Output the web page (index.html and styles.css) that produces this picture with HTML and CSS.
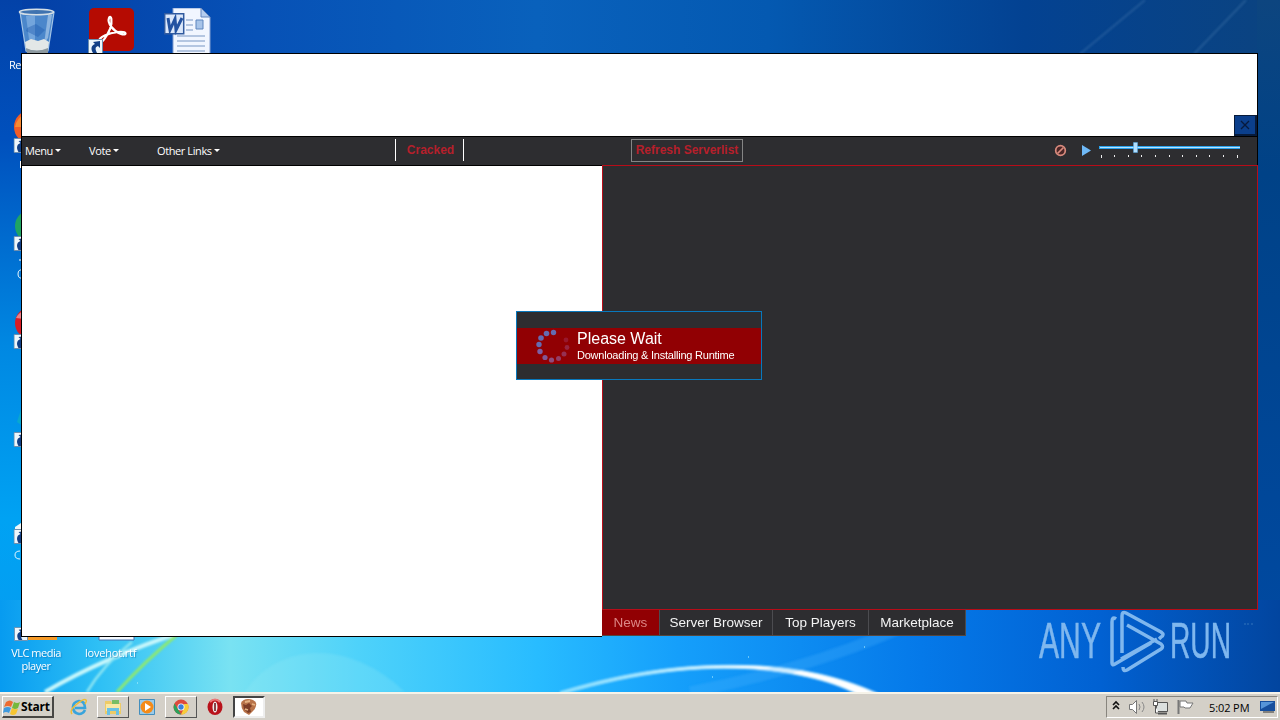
FILE: index.html
```html
<!DOCTYPE html>
<html lang="en">
<head>
<meta charset="utf-8">
<title>Desktop</title>
<link rel="stylesheet" href="styles.css">
</head>
<body>
<svg width="0" height="0" class="defs">
  <defs>
    <symbol id="shortcut" viewBox="0 0 15 15"><path fill="#eef6fb" stroke="#6d8fb0" d="M.5.5h14v14H.5z"/><path d="M5 14C2 9 4 6 7 5L5 3l7-1v7l-2-2c-3 1-3 3-1 7z" fill="#123f86"/></symbol>
  </defs>
</svg>
<main class="desktop">
  <svg class="wallpaper" viewBox="0 0 1280 692" preserveAspectRatio="none">
    <defs>
      <linearGradient id="side" x1="0" y1="0" x2="0" y2="1"><stop offset="0" stop-color="#0342a8"/><stop offset=".2" stop-color="#0050bd"/><stop offset=".5" stop-color="#0088e2"/><stop offset=".75" stop-color="#00a2f3"/><stop offset="1" stop-color="#079bf0"/></linearGradient>
      <linearGradient id="top"><stop offset="0" stop-color="#033ea5"/><stop offset=".2" stop-color="#0751b6"/><stop offset=".42" stop-color="#0961bc"/><stop offset=".6" stop-color="#0459b1"/><stop offset=".8" stop-color="#034292"/><stop offset="1" stop-color="#0b4380"/></linearGradient>
      <linearGradient id="low"><stop offset="0" stop-color="#079bf0"/><stop offset=".08" stop-color="#30c1f5"/><stop offset=".18" stop-color="#79e2f2"/><stop offset=".28" stop-color="#4ed2fa"/><stop offset=".42" stop-color="#28bcff"/><stop offset=".53" stop-color="#159ffb"/><stop offset=".72" stop-color="#0579e9"/><stop offset=".86" stop-color="#0161d2"/><stop offset="1" stop-color="#02459f"/></linearGradient>
      <linearGradient id="right" x1="0" y1="0" x2="0" y2="1"><stop offset="0" stop-color="#0d457f"/><stop offset=".25" stop-color="#004287"/><stop offset="1" stop-color="#004aa4"/></linearGradient>
      <filter id="soft" x="-10%" y="-50%" width="120%" height="200%"><feGaussianBlur stdDeviation="1.1"/></filter>
      <linearGradient id="arc"><stop offset="0" stop-color="#8cecff" stop-opacity=".6"/><stop offset=".6" stop-color="#fff"/><stop offset="1" stop-color="#fff"/></linearGradient>
    </defs>
    <path fill="url(#top)" d="M0 0h1280v70H0z"/>
    <path fill="url(#side)" d="M0 0h22v692H0z"/>
    <path fill="url(#right)" d="M1257 0h23v692h-23z"/>
    <path fill="url(#low)" d="M0 600h1280v92H0z"/>
    <g filter="url(#soft)">
      <path d="M45 692Q105 657 185 631" stroke="#c8f7fb" stroke-width="4" fill="none"/>
      <path d="M87 692Q103 665 132 642" stroke="#8ee6f3" stroke-width="2.5" fill="none"/>
      <path d="M117 692Q145 661 178 634" stroke="#8ee970" stroke-width="3" fill="none"/>
      <path d="M245 692C275 645 345 635 405 692" fill="#9cecf6" opacity=".22"/>
      <path d="M560 692C650 665 710 664 760 666C810 669 850 680 885 697L862 697C835 681 798 673 755 669C700 666 640 671 562 694z" fill="url(#arc)" stroke="#c8efff" stroke-width="1"/>
      <path d="M690 692Q830 665 940 610" stroke="#4bb7ff" stroke-width="11" fill="none" opacity=".25"/>
      <path d="M1145 0L1080 54M1246 0l-52 54" stroke="#6f9dc7" stroke-width="2" opacity=".25"/>
    </g>
    <path d="M137 683h1M748 657h1M864 647h1M712 677h1" stroke="#b5f3ff" stroke-width="1.500" opacity=".7"/>
    <path d="M1244 624h2M1247 624h2M1251 624h2" stroke="#3275bb" stroke-width="1"/>
  </svg>

  <svg class="icon bin" viewBox="0 0 40 48"><path d="M3 4l6 39q12 6 22 0l6-39z" fill="#4b87cb" stroke="#a4c5e6" stroke-width="1.200"/><path d="M9 8l4 31 5 3V8z" fill="#9bc4ee" opacity=".5"/><path d="M31 7l-4 29 4-6 4-23z" fill="#b9d3ee" opacity=".6"/><path d="M10 20l9-4 9 6-7 7-12-6" fill="#1b57ac" opacity=".4"/><path d="M8 34l6-3 7 2 6-2 5 3-1 7q-10 4-22 0z" fill="#e3e7e7"/><path d="M9 40q10 5 22 0v5q-11 4-21 0z" fill="#8d999f"/><ellipse cx="19.500" cy="4" rx="17" ry="2.800" fill="#3f73b0" stroke="#d5dfe6" stroke-width="1.600"/></svg>
  <svg class="icon acrobat" viewBox="0 0 48 48"><rect x="2" y="0" width="45" height="43" rx="5" fill="#b50b02"/><path d="M12 34C11 29 22 25 31 24c10-1 9 4 3 2-8-3-14-11-12-16 2-4 4 3 1 11-3 7-8 15-11 13z" fill="none" stroke="#fff" stroke-width="2.200"/></svg>
  <svg class="badge acrobat-badge"><use href="#shortcut"/></svg>
  <svg class="icon word" viewBox="0 0 48 46"><path d="M9 0h28l9 9v37H9z" fill="#f1f6ff" stroke="#839fd0"/><path d="M37 0v9h9z" fill="#b5cdef" stroke="#6485bd"/><path d="M22 12h7M22 17h7M22 22h7M13 28h28M13 33h28M13 38h28M13 43h28" stroke="#7895c4" stroke-width="1.200"/><path d="M32 12h7v9h-7z" fill="#a7c4e9" stroke="#5d85be"/><path d="M.7 5.700h19v20H.7z" fill="#dce8fa" stroke="#315b9f" stroke-width="1.500"/><path d="M4 10l2 12 5-11 1 11 6-12" fill="none" stroke="#2453a1" stroke-width="3"/></svg>
  <span class="label recycle">Recycle Bin</span>

  <svg class="edge-icons" viewBox="0 0 24 540" width="24" height="540">
    <circle cx="31" cy="27" r="17" fill="#f05d27"/><path d="M15 27q2-10 10-12v12z" fill="#f78b30"/>
    <circle cx="31" cy="126" r="16" fill="#1fa463"/>
    <circle cx="31" cy="223" r="16" fill="#d91c25"/><path d="M16 218q2-5 8-7v8z" fill="#e9828a"/>
    <path d="M17 322l7-22v27z" fill="#08a8cf"/><path d="M15 427l9-6v9h-9z" fill="#edf7fa"/>
    <use href="#shortcut" x="13.500" y="38" width="15" height="15"/><use href="#shortcut" x="13.500" y="136" width="15" height="15"/><use href="#shortcut" x="13.500" y="234" width="15" height="15"/><use href="#shortcut" x="13.500" y="332" width="15" height="15"/><use href="#shortcut" x="13.500" y="429" width="15" height="15"/>
    <path d="M20.500 61v7M19 160h2" stroke="#fff"/>
    <path d="M23 170q-5-1-5 4t5 4M20 451q-5 0-5 4t5 4" stroke="#e8f7ff" fill="none"/>
  </svg>
  <svg class="vlc" viewBox="0 0 44 15"><path d="M14 8h29v5H14z" fill="#f59a28"/><use href="#shortcut" width="14" height="14"/></svg>
  <svg class="rtf" viewBox="0 0 38 6"><path d="M1 0h35v4H1z" fill="#f5fbff" stroke="#456fb0"/></svg>
  <span class="label vlc-label">VLC media<br>player</span>
  <span class="label rtf-label">lovehot.rtf</span>

  <section class="window">
    <header class="banner"><button class="close" aria-label="Close"><svg viewBox="0 0 10 10"><path d="M1 1l8 8M9 1L1 9" stroke="#071a3d" stroke-width="1.300"/></svg></button></header>
    <nav class="toolbar">
      <span class="menu m1">Menu<i></i></span><span class="menu m2">Vote<i></i></span><span class="menu m3">Other Links<i></i></span>
      <span class="cracked"><b>Cracked</b></span>
      <span class="refresh"><b>Refresh Serverlist</b></span>
      <svg class="player" viewBox="0 0 190 28" width="190" height="28"><circle cx="8.500" cy="13.500" r="4.800" fill="#4c2627" stroke="#d98b7e" stroke-width="1.700"/><path d="M5.500 16.500l6-6" stroke="#d98b7e" stroke-width="1.700"/><path d="M30 8v11l9-5.500z" fill="#6fb9f7"/><path d="M47 10.500h141" stroke="#2aa2ee" stroke-width="3"/><path d="M48 10.500h140" stroke="#b9e5ff"/><path d="M81.500 5.500h4v10h-4z" fill="#b1dfff" stroke="#52abe9" stroke-width=".5"/><path d="M49.500 18v3M62.500 18v2M76.500 18v2M89.500 18v2M103.500 18v2M117.500 18v2M130.500 18v2M144.500 18v2M157.500 18v2M171.500 18v2M185.500 18v3" stroke="#eee"/></svg>
    </nav>
    <div class="content">
      <div class="blank"></div>
      <div class="right">
        <div class="news"></div>
        <div class="tabs"><span class="active">News</span><span class="t2">Server Browser</span><span class="t3">Top Players</span><span class="t4">Marketplace</span></div>
      </div>
    </div>
  </section>

  <div class="dialog">
    <div class="message">
      <svg class="spinner" viewBox="0 0 36 36" width="36" height="36"><g fill="#656bb1"><circle cx="18.500" cy="4.500" r="2.700"/><circle cx="11.500" cy="5.500" r="2.800"/><circle cx="6" cy="10" r="2.800"/><circle cx="4" cy="16.500" r="2.700"/></g><circle cx="5" cy="23.500" r="2.700" fill="#7d5fa4"/><circle cx="10" cy="29.500" r="2.600" fill="#815796"/><circle cx="16.500" cy="32" r="2.600" fill="#8f4c7d"/><circle cx="23.500" cy="30.500" r="2.500" fill="#943d66"/><circle cx="29" cy="26" r="2.500" fill="#963052"/><circle cx="32" cy="19.500" r="2.400" fill="#98243f"/><circle cx="31" cy="12" r="2.400" fill="#98172c"/></svg>
      <div class="copy"><span class="wait">Please Wait</span><span class="progress">Downloading &amp; Installing Runtime</span></div>
    </div>
  </div>

  <svg class="watermark" viewBox="0 0 240 76" width="240" height="76">
    <g fill="none" stroke="#7fb7ee" stroke-width="3.500" stroke-linejoin="round"><path d="M96 11q-4-3-4 3v41q0 3 3 1l36-21M102 45V8q0-5 4-3l35 19q4 3 0 5l-2 2"/><path d="M107 17l34 19q3 3 0 5l-34 21q-4 2-4-3M101 51l36-20"/></g>
    <text x="19" y="50" textLength="62" lengthAdjust="spacingAndGlyphs">ANY</text>
    <text x="150" y="50" textLength="61" lengthAdjust="spacingAndGlyphs">RUN</text>
  </svg>
</main>

<footer class="taskbar">
  <div class="start"><svg viewBox="0 0 18 16" width="18" height="16"><path d="M3 3q4-3 7 0L8 8Q5 6 1 8z" fill="#ed6c31"/><path d="M11 3q3 2 6 0l-2 6q-3 2-6 0z" fill="#75b83d"/><path d="M1 9q4-2 7 0l-2 5q-3-2-6 0z" fill="#3f9ade"/><path d="M9 9q3 2 6 1l-2 5q-3 2-6 0z" fill="#f6c530"/></svg><b>Start</b></div>
  <div class="task ie"><svg viewBox="0 0 18 18"><path d="M15 12q-2 4-6 4-6-1-6-7 0-5 6-6 6 0 6 7H5" fill="none" stroke="#38a4dc" stroke-width="2.700"/><path d="M2 16Q-1 12 7 6q7-6 9-4 1 1-1 4" fill="none" stroke="#edbd37" stroke-width="1.500"/></svg></div>
  <div class="task raised"><svg viewBox="0 0 18 18"><path d="M1 3h6l1 2h9v11H1z" fill="#eecb66"/><path d="M2 6h14v7H2z" fill="#fae8a4"/><path d="M8 2h7v4H8z" fill="#79bd65"/><path d="M3 10h12v7h-3v-4H6v4H3z" fill="#6bc1e4"/></svg></div>
  <div class="task"><svg viewBox="0 0 18 18"><path d="M1.500 1.500h15v15h-15z" fill="#9acbea" stroke="#438ebd"/><circle cx="9" cy="9" r="6.500" fill="#f48b19"/><path d="M7 5l6 4-6 4z" fill="#fff"/></svg></div>
  <div class="task raised"><svg viewBox="0 0 18 18"><circle cx="9" cy="9" r="7.500" fill="#dd4a3d"/><path d="M2.500 5.500L7 13l2 3.500A7.500 7.500 0 0 1 2.500 5.500z" fill="#2aa25b"/><path d="M9 16.500L12 10V6h4a7.500 7.500 0 0 1-7 10.500z" fill="#f7cd3b"/><circle cx="9" cy="9" r="3.500" fill="#fff"/><circle cx="9" cy="9" r="2.700" fill="#3a80dc"/></svg></div>
  <div class="task"><svg viewBox="0 0 18 18"><ellipse cx="9" cy="9" rx="7.500" ry="8" fill="#b9121b"/><path d="M4 4q5-5 10 0" stroke="#ec7777" stroke-width="2" fill="none"/><ellipse cx="9" cy="9" rx="2.500" ry="5.500" fill="#eee"/><path d="M9 5v8" stroke="#650d11" stroke-width="1.500"/></svg></div>
  <div class="task pressed"><svg viewBox="0 0 18 18"><path d="M1 5q2-4 7-4 6 0 8 4 1 4-3 8l-4 4-5-3Q1 10 1 5z" fill="#b87349"/><path d="M3 6l3 1 3-2 3 3-2 2 1 4-3 1-4-4z" fill="#7d3e27"/><path d="M5 4l5-1M12 6l3 1M5 11l3 1" stroke="#e5b384" stroke-width="1.800"/></svg></div>
  <div class="tray">
    <svg viewBox="0 0 90 22" width="90" height="22"><path d="M6 9l3-3 3 3M6 13l3-3 3 3" fill="none" stroke="#111" stroke-width="1.600"/><path d="M22.500 8.500h3l4-4v13l-4-4h-3z" fill="#fff" stroke="#777"/><path d="M32 8q2 3 0 6M35 6q4 5 0 10" fill="none" stroke="#888"/><path d="M49.500 6.500h11v9h-11z" fill="#dce0df" stroke="#555"/><path d="M51 17.500h9" stroke="#555" stroke-width="2"/><path d="M46.500 5.500h4v4h-4zM48.500 10v7h3M47 3v2m3-2v2" fill="#fff" stroke="#555"/><path d="M71.500 4v14" stroke="#777" stroke-width="2"/><path d="M73 5h6l1 2h6l-3 5h-5l-1-1h-4z" fill="#fff" stroke="#777"/></svg>
    <span>5:02 PM</span>
    <svg class="monitor" viewBox="0 0 16 14" width="16" height="14"><path d="M0 1h15v10H0z" fill="#174f9d"/><path d="M1 2h13L1 9z" fill="#5795d8"/><path d="M3 12h11" stroke="#333"/></svg>
  </div>
</footer>
</body>
</html>
```
FILE: styles.css
```css
* { box-sizing: border-box; }
body { margin: 0; width: 1280px; height: 720px; overflow: hidden; display: flex; flex-direction: column; font-family: "Open Sans", "Noto Sans", sans-serif; font-size: 11px; }
svg { display: block; flex: none; }
.defs { position: absolute; }
.desktop { position: relative; height: 692px; flex: none; overflow: hidden; }
.wallpaper { width: 1280px; height: 692px; }
.icon, .badge, .label, .edge-icons, .vlc, .rtf, .window, .dialog, .watermark { position: absolute; }
.bin { left: 17px; top: 8px; width: 40px; height: 48px; }
.acrobat { left: 87px; top: 8px; width: 48px; height: 48px; }
.acrobat-badge { left: 88px; top: 39px; width: 15px; height: 15px; }
.word { left: 164px; top: 8px; width: 48px; height: 46px; }
.label { color: #fff; font-size: 11px; line-height: 13px; letter-spacing: -.5px; white-space: nowrap; text-align: center; text-shadow: 1px 1px 1px #0564a580; }
.recycle { left: 9px; top: 58px; }
.edge-icons { left: 0; top: 100px; }
.vlc { left: 14px; top: 627px; width: 44px; height: 15px; }
.rtf { left: 98px; top: 636px; width: 38px; height: 6px; }
.vlc-label { left: 11px; top: 646px; width: 50px; }
.rtf-label { left: 85px; top: 646px; letter-spacing: -.2px; }

.window { left: 21px; top: 53px; width: 1237px; height: 584px; display: flex; flex-direction: column; }
.banner { height: 83px; flex: none; background: #fff; border: solid #000; border-width: 1px 1px 0; display: flex; align-items: flex-end; justify-content: flex-end; }
.close { width: 23px; height: 21px; padding: 0; border: 1px solid #071b3b; border-right-width: 2px; border-bottom-width: 2px; background: #0b3f8c; display: flex; align-items: center; justify-content: center; }
.close svg { width: 10px; height: 10px; }
.toolbar { height: 30px; flex: none; background: #2d2d30; border: 1px solid #000; display: flex; align-items: flex-start; color: #fff; }
.menu { display: flex; align-items: center; gap: 2px; height: 26px; letter-spacing: -.4px; white-space: nowrap; }
.menu i { border: 3px solid transparent; border-top-color: #fff; border-bottom: 0; }
.m1 { width: 64px; padding-left: 3px; }
.m2 { width: 68px; padding-left: 3px; }
.m3 { width: 241px; padding-left: 3px; }
.cracked { width: 69px; height: 22px; margin-top: 2px; padding-left: 2px; border: solid #fff; border-width: 0 1px; display: flex; align-items: center; justify-content: center; }
.cracked b, .refresh b { font: bold 12px/18px "Liberation Sans", sans-serif; color: #b61f2b; white-space: nowrap; }
.refresh { width: 112px; height: 23px; margin: 2px 0 0 167px; padding-bottom: 2px; border: 1px solid #858585; display: flex; align-items: center; justify-content: center; }
.player { margin-left: 309px; }
.content { display: flex; flex: 1; }
.blank { width: 581px; background: #fff; border: solid #000; border-width: 0 0 1px 1px; }
.right { width: 656px; display: flex; flex-direction: column; margin-top: -1px; }
.news { height: 445px; background: #2d2d30; border: 1px solid #b80c18; }
.tabs { display: flex; width: 364px; height: 27px; background: #2d2d30; border-right: 1px solid #4b4b4e; border-bottom: 1px solid #55463e; margin-top: -1px; border-top: 1px solid #b80c18; }
.tabs span { display: flex; align-items: center; justify-content: center; border-right: 1px solid #4c4c50; color: #f4f4f4; font: 13.5px "Liberation Sans", sans-serif; white-space: nowrap; }
.tabs .active { width: 58px; background: #910003; color: #dc8585; }
.tabs .t2 { width: 113px; }
.tabs .t3 { width: 96px; }
.tabs .t4 { width: 96px; border: 0; }

.dialog { left: 516px; top: 311px; width: 246px; height: 69px; background: #2d2d30; border: 1px solid #0878bd; padding-top: 16px; }
.message { height: 36px; background: #910003; display: flex; }
.spinner { margin: 0 0 0 18px; }
.copy { display: flex; flex-direction: column; margin-left: 6px; color: #fff; font-family: "Liberation Sans", sans-serif; white-space: nowrap; }
.wait { font-size: 16px; line-height: 22px; height: 21px; }
.progress { font-size: 11px; line-height: 13px; letter-spacing: -.22px; }
.watermark { left: 1020px; top: 608px; }
.watermark text { font: 50px/50px "Liberation Sans", sans-serif; fill: #7fb7ee; stroke: #7fb7ee; stroke-width: .5px; }

.taskbar { height: 28px; flex: none; background: #d4d0c8; border-top: 2px solid #f6f3e9; display: flex; align-items: flex-start; padding: 2px 2px 0 2px; }
.start { width: 52px; height: 22px; border: 1px solid #fff; border-right: 2px solid #484744; border-bottom: 2px solid #484744; display: flex; align-items: center; margin-right: 9px; }
.start b { font-size: 12px; letter-spacing: -.2px; }
.task { width: 32px; height: 22px; margin-right: 2px; display: flex; align-items: center; justify-content: center; border: 1px solid transparent; }
.task svg { width: 18px; height: 18px; }
.raised { border-color: #fff #555 #555 #fff; }
.pressed { background: #fff; border: 2px solid #444; border-right-color: #eee; border-bottom-color: #eee; }
.tray { width: 172px; height: 22px; margin-left: auto; border: 1px solid #88857e; border-right-color: #fff; border-bottom-color: #fff; display: flex; align-items: center; }
.tray span { margin-left: 12px; width: 42px; letter-spacing: -.1px; white-space: nowrap; }
.monitor { margin-left: 9px; }
```
